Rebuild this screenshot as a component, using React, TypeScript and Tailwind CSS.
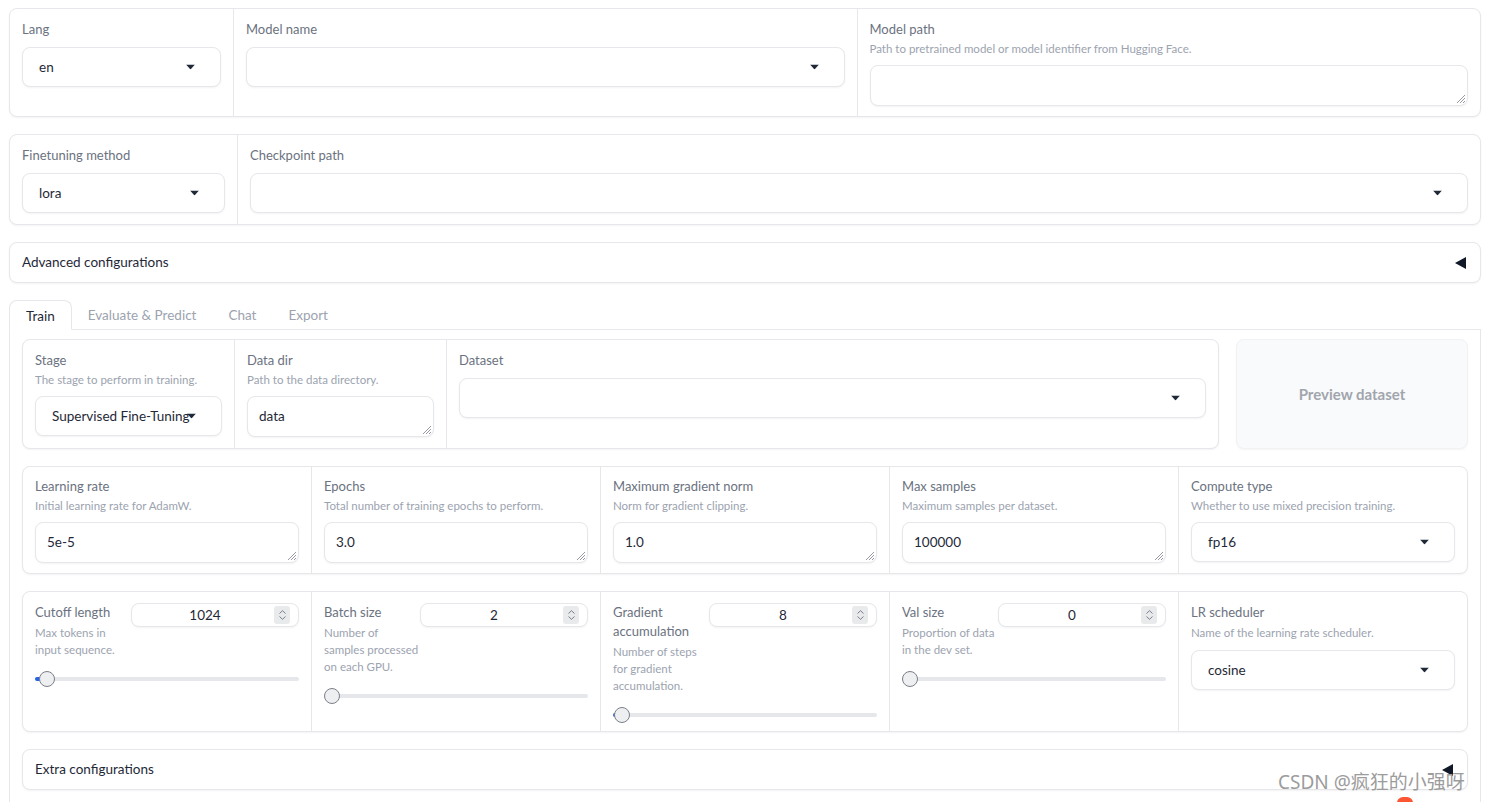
import React from "react";

const LBL = "text-[13px] leading-[18px] text-[#6b7280]";
const INFO = "mt-[2px] text-[11.5px] leading-[18px] text-[#9ca3af]";
const VAL = "text-[13.5px] text-[#1f2937]";
const BOX =
  "rounded-lg border border-[#e5e7eb] bg-white shadow-[0_1px_2px_rgba(0,0,0,0.05)]";

function Caret() {
  return (
    <svg
      width="9"
      height="5"
      viewBox="0 0 9 5"
      className="absolute right-[25px] top-1/2 -translate-y-1/2"
    >
      <path d="M0 0H9L4.5 5Z" fill="#1f2937" />
    </svg>
  );
}

function Dropdown({ value = "" }: { value?: string }) {
  return (
    <div
      className={`relative h-10 ${BOX} flex items-center pl-4 pr-[30px] overflow-hidden`}
    >
      <span className={`whitespace-nowrap ${VAL}`}>{value}</span>
      <Caret />
    </div>
  );
}

function Grip() {
  return (
    <svg
      width="9"
      height="9"
      viewBox="0 0 9 9"
      className="absolute right-[2px] bottom-[2px]"
    >
      <path
        d="M9 1L1 9M9 4L4 9M9 7L7 9"
        stroke="#8b8f96"
        strokeWidth="0.9"
      />
    </svg>
  );
}

function TextBox({ value = "" }: { value?: string }) {
  return (
    <div className={`relative h-[41px] ${BOX} flex items-center pl-[11px]`}>
      <span className={VAL}>{value}</span>
      <Grip />
    </div>
  );
}

function Field({
  label,
  info,
  children,
}: {
  label: string;
  info?: string;
  children: React.ReactNode;
}) {
  return (
    <div className="flex flex-col">
      <div className={LBL}>{label}</div>
      {info && <div className={INFO}>{info}</div>}
      <div className={info ? "mt-[7px]" : "mt-[9px]"}>{children}</div>
    </div>
  );
}

function Spinner() {
  return (
    <div className="mr-[8px] flex h-[18px] w-4 flex-col items-center justify-center gap-[2px] rounded-[3px] bg-[#e9eaec]">
      <svg width="7" height="4" viewBox="0 0 7 4">
        <path d="M0.5 3.5L3.5 0.7L6.5 3.5" stroke="#6b7280" strokeWidth="0.9" fill="none" />
      </svg>
      <svg width="7" height="4" viewBox="0 0 7 4">
        <path d="M0.5 0.5L3.5 3.3L6.5 0.5" stroke="#6b7280" strokeWidth="0.9" fill="none" />
      </svg>
    </div>
  );
}

function NumberBox({ value }: { value: string }) {
  return (
    <div className="flex h-6 flex-1 items-center rounded-lg border border-[#e5e7eb] bg-white shadow-[0_1px_2px_rgba(0,0,0,0.05)]">
      <span className={`flex-1 pl-[4px] text-center ${VAL}`}>{value}</span>
      <Spinner />
    </div>
  );
}

function Slider({ thumb, fill }: { thumb: string; fill?: boolean }) {
  return (
    <div className="relative mt-[13px] h-4">
      <div className="absolute left-0 right-0 top-[6px] h-[4px] rounded-full bg-[#e5e7eb]" />
      {fill && (
        <div className="absolute left-0 top-[6px] h-[4px] w-[6px] rounded-full bg-[#2563eb]" />
      )}
      <div
        className={`absolute top-0 h-4 w-4 rounded-full border border-[#7b8088] bg-[#eeeff1] ${thumb}`}
      />
    </div>
  );
}

function SliderCol({
  label,
  info,
  value,
  thumb,
  fill,
}: {
  label: string[];
  info: string[];
  value: string;
  thumb: string;
  fill?: boolean;
}) {
  return (
    <div className="flex-1 px-3 pt-[11px] pb-[8px]">
      <div className="flex items-start">
        <div className="w-[96px] shrink-0">
          <div className="text-[13px] leading-[19px] text-[#6b7280]">
            {label.map((l, i) => (
              <div key={i} className="whitespace-nowrap">
                {l}
              </div>
            ))}
          </div>
          <div className="mt-[2px] text-[11.5px] leading-[17px] text-[#9ca3af]">
            {info.map((l, i) => (
              <div key={i} className="whitespace-nowrap">
                {l}
              </div>
            ))}
          </div>
        </div>
        <NumberBox value={value} />
      </div>
      <Slider thumb={thumb} fill={fill} />
    </div>
  );
}

function Triangle() {
  return (
    <svg width="11" height="12" viewBox="0 0 11 12">
      <path d="M11 0V12L0 6Z" fill="#111827" />
    </svg>
  );
}

const COL = "px-3 pt-[11px] pb-[10px]";
const COL3 = "px-3 pt-[10px] pb-[10px]";

export default function App() {
  return (
    <div className="relative h-[802px] w-full overflow-hidden bg-white font-['Lato','Noto_Sans',sans-serif]">
      <div className="flex flex-col gap-[17px] pl-[9px] pr-[4px] pt-2">
        {/* Row 1 */}
        <div className={`flex divide-x divide-[#e5e7eb] ${BOX}`}>
          <div className={`w-[224px] shrink-0 ${COL}`}>
            <Field label="Lang">
              <Dropdown value="en" />
            </Field>
          </div>
          <div className={`flex-1 ${COL}`}>
            <Field label="Model name">
              <Dropdown />
            </Field>
          </div>
          <div className={`flex-1 ${COL}`}>
            <Field
              label="Model path"
              info="Path to pretrained model or model identifier from Hugging Face."
            >
              <TextBox />
            </Field>
          </div>
        </div>

        {/* Row 2 */}
        <div className={`flex divide-x divide-[#e5e7eb] ${BOX}`}>
          <div className="w-[228px] shrink-0 px-3 pt-[11px] pb-[11px]">
            <Field label="Finetuning method">
              <Dropdown value="lora" />
            </Field>
          </div>
          <div className="flex-1 px-3 pt-[11px] pb-[11px]">
            <Field label="Checkpoint path">
              <Dropdown />
            </Field>
          </div>
        </div>

        {/* Advanced configurations */}
        <div className={`flex h-[41px] items-center justify-between pl-3 pr-[14px] ${BOX}`}>
          <span className={VAL}>Advanced configurations</span>
          <Triangle />
        </div>

        {/* Tabs */}
        <div className="flex flex-col">
          <div className="flex h-[30px] items-stretch border-b border-[#e5e7eb]">
            <div className="-mb-px flex items-center rounded-t-lg border border-b-white border-[#e5e7eb] bg-white px-4 pt-[2px] text-[13.5px] text-[#1f2937]">
              Train
            </div>
            <div className="flex items-center px-4 pt-[2px] text-[13.5px] text-[#9ca3af]">
              Evaluate &amp; Predict
            </div>
            <div className="flex items-center px-4 pt-[2px] text-[13.5px] text-[#9ca3af]">Chat</div>
            <div className="flex items-center px-4 pt-[2px] text-[13.5px] text-[#9ca3af]">Export</div>
          </div>

          <div className="flex flex-col gap-[17px] border-x border-b border-[#e5e7eb] px-3 pt-[9px] pb-4">
            {/* Stage row */}
            <div className="flex gap-[17px]">
              <div className={`flex flex-1 divide-x divide-[#e5e7eb] ${BOX}`}>
                <div className="w-[212px] shrink-0 px-3 pt-[11px] pb-[11px]">
                  <Field label="Stage" info="The stage to perform in training.">
                    <Dropdown value="Supervised Fine-Tuning" />
                  </Field>
                </div>
                <div className="w-[212px] shrink-0 px-3 pt-[11px] pb-[11px]">
                  <Field label="Data dir" info="Path to the data directory.">
                    <TextBox value="data" />
                  </Field>
                </div>
                <div className="flex-1 px-3 pt-[11px] pb-[11px]">
                  <div className={LBL}>Dataset</div>
                  <div className="mt-[9px]">
                    <Dropdown />
                  </div>
                </div>
              </div>
              <div className="flex w-[232px] shrink-0 items-center justify-center rounded-lg border border-[#f1f2f4] bg-[#f9fafb] shadow-[0_1px_2px_rgba(0,0,0,0.04)]">
                <span className="text-[15px] font-bold text-[#a1a5ad]">Preview dataset</span>
              </div>
            </div>

            {/* Row 3 */}
            <div className={`flex divide-x divide-[#e5e7eb] ${BOX}`}>
              <div className={`flex-1 ${COL3}`}>
                <Field label="Learning rate" info="Initial learning rate for AdamW.">
                  <TextBox value="5e-5" />
                </Field>
              </div>
              <div className={`flex-1 ${COL3}`}>
                <Field label="Epochs" info="Total number of training epochs to perform.">
                  <TextBox value="3.0" />
                </Field>
              </div>
              <div className={`flex-1 ${COL3}`}>
                <Field label="Maximum gradient norm" info="Norm for gradient clipping.">
                  <TextBox value="1.0" />
                </Field>
              </div>
              <div className={`flex-1 ${COL3}`}>
                <Field label="Max samples" info="Maximum samples per dataset.">
                  <TextBox value="100000" />
                </Field>
              </div>
              <div className={`flex-1 ${COL3}`}>
                <Field label="Compute type" info="Whether to use mixed precision training.">
                  <Dropdown value="fp16" />
                </Field>
              </div>
            </div>

            {/* Row 4 */}
            <div className={`flex divide-x divide-[#e5e7eb] ${BOX}`}>
              <SliderCol
                label={["Cutoff length"]}
                info={["Max tokens in", "input sequence."]}
                value="1024"
                thumb="left-[4px]"
                fill
              />
              <SliderCol
                label={["Batch size"]}
                info={["Number of", "samples processed", "on each GPU."]}
                value="2"
                thumb="left-0"
              />
              <SliderCol
                label={["Gradient", "accumulation"]}
                info={["Number of steps", "for gradient", "accumulation."]}
                value="8"
                thumb="left-[1px]"
                fill
              />
              <SliderCol
                label={["Val size"]}
                info={["Proportion of data", "in the dev set."]}
                value="0"
                thumb="left-0"
              />
              <div className="flex-1 px-3 pt-[11px]">
                <div className="text-[13px] leading-[19px] text-[#6b7280]">LR scheduler</div>
                <div className="mt-[2px] text-[11.5px] leading-[17px] text-[#9ca3af]">
                  Name of the learning rate scheduler.
                </div>
                <div className="mt-[9px]">
                  <Dropdown value="cosine" />
                </div>
              </div>
            </div>

            {/* Extra configurations */}
            <div className={`flex h-[41px] items-center justify-between pl-3 pr-[14px] ${BOX}`}>
              <span className={VAL}>Extra configurations</span>
              <Triangle />
            </div>
          </div>
        </div>
      </div>

      {/* watermark */}
      <div className="absolute left-[1278px] top-[770px] whitespace-nowrap font-['Noto_Sans','Noto_Sans_CJK_SC',sans-serif] text-[19px] leading-[24px] text-[#9c9c9c]">
        CSDN @疯狂的小强呀
      </div>
      <div className="absolute left-[1397px] top-[797px] h-[12px] w-[16px] rounded-full bg-[#fc5531]" />
    </div>
  );
}
